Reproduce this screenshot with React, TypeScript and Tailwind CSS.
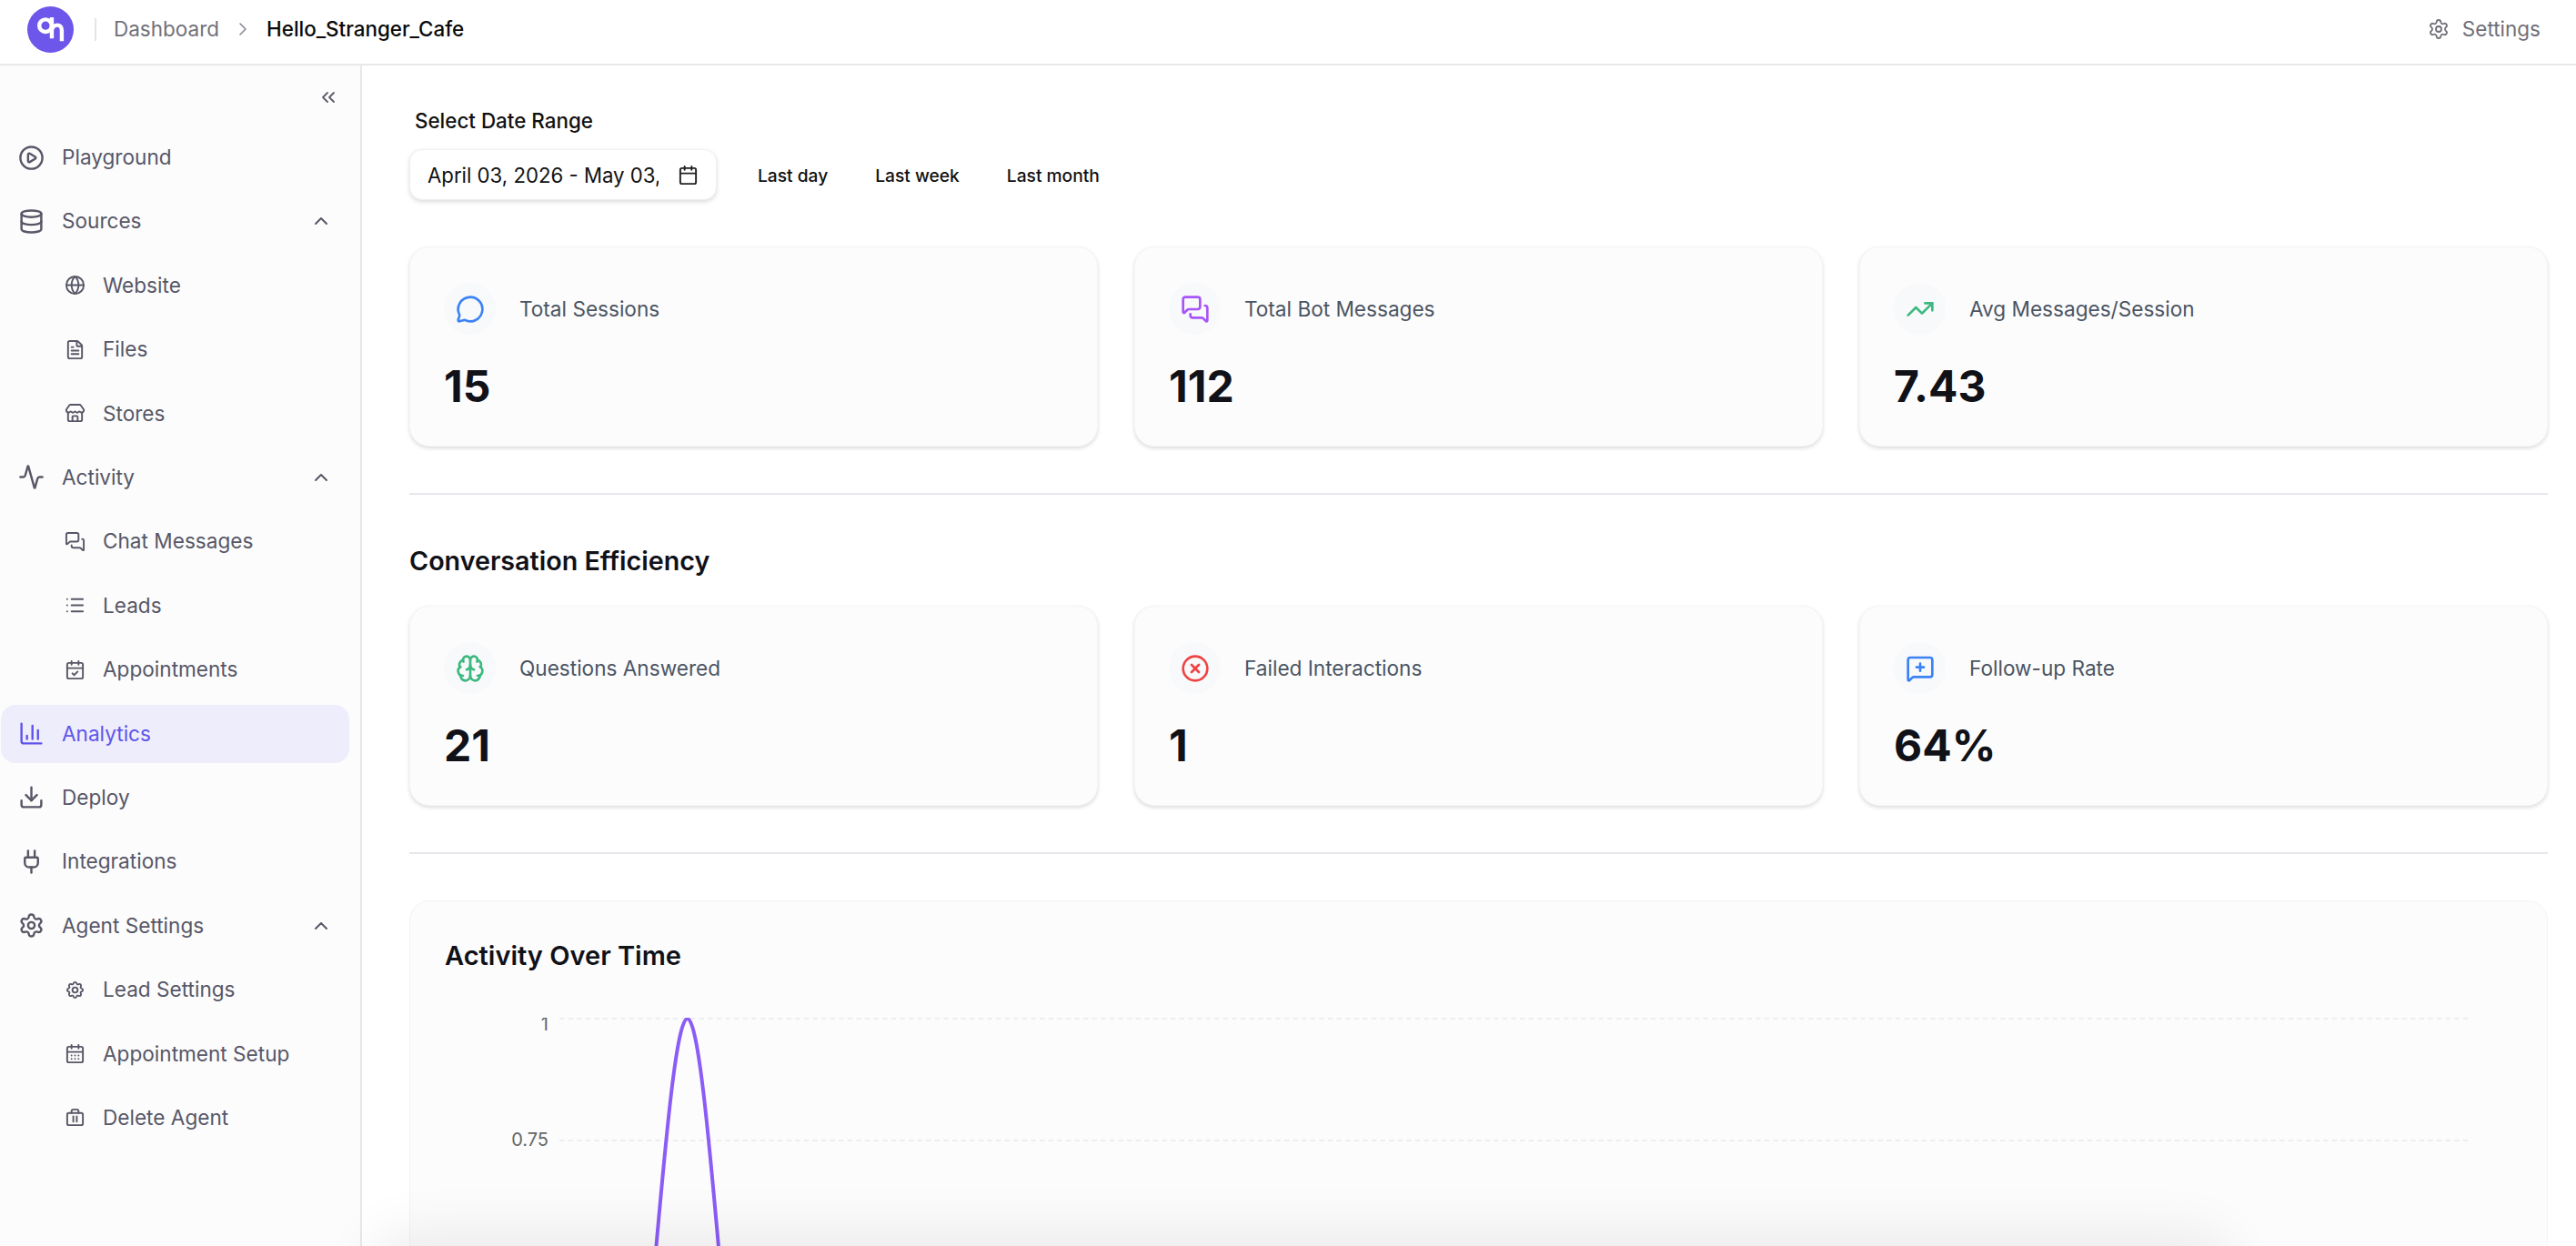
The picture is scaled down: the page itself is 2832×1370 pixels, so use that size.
import {
  Activity,
  Brain,
  Calendar,
  CalendarCheck,
  CalendarDays,
  ChartColumn,
  ChevronRight,
  ChevronsLeft,
  ChevronUp,
  CircleX,
  CirclePlay,
  Database,
  Download,
  FileText,
  Globe,
  List,
  MessageCircle,
  MessageSquarePlus,
  MessagesSquare,
  Plug,
  Settings,
  Store,
  TrendingUp,
} from "lucide-react"
import { TbSettings } from "react-icons/tb"

const font = "font-['Inter',sans-serif]"

function TrashBox({ className }: { className?: string }) {
  return (
    <svg viewBox="0 0 24 24" fill="none" stroke="currentColor" strokeWidth="2" strokeLinecap="round" strokeLinejoin="round" className={className}>
      <path d="M8 7V5a2 2 0 0 1 2-2h4a2 2 0 0 1 2 2v2" />
      <rect x="3" y="7" width="18" height="14" rx="2" />
      <path d="M10 11v6" />
      <path d="M14 11v6" />
    </svg>
  )
}

const navItems = [
  { label: "Playground", icon: CirclePlay },
  { label: "Sources", icon: Database, open: true },
  { label: "Website", icon: Globe, sub: true },
  { label: "Files", icon: FileText, sub: true },
  { label: "Stores", icon: Store, sub: true },
  { label: "Activity", icon: Activity, open: true },
  { label: "Chat Messages", icon: MessagesSquare, sub: true },
  { label: "Leads", icon: List, sub: true },
  { label: "Appointments", icon: CalendarCheck, sub: true },
  { label: "Analytics", icon: ChartColumn, active: true },
  { label: "Deploy", icon: Download },
  { label: "Integrations", icon: Plug },
  { label: "Agent Settings", icon: Settings, open: true },
  { label: "Lead Settings", icon: TbSettings, sub: true },
  { label: "Appointment Setup", icon: CalendarDays, sub: true },
  { label: "Delete Agent", icon: TrashBox, sub: true },
]

const topStats = [
  { label: "Total Sessions", value: "15", icon: MessageCircle, color: "text-[#3b82f6]" },
  { label: "Total Bot Messages", value: "112", icon: MessagesSquare, color: "text-[#a855f7]" },
  { label: "Avg Messages/Session", value: "7.43", icon: TrendingUp, color: "text-[#3cb97f]" },
]

const efficiencyStats = [
  { label: "Questions Answered", value: "21", icon: Brain, color: "text-[#3cb97f]" },
  { label: "Failed Interactions", value: "1", icon: CircleX, color: "text-[#ef4444]" },
  { label: "Follow-up Rate", value: "64%", icon: MessageSquarePlus, color: "text-[#3b82f6]" },
]

function Sidebar() {
  return (
    <aside className="w-[398px] shrink-0 border-r-2 border-[#e8e8e8] bg-[#fcfcfc]">
      <div className="flex h-[69px] items-center justify-end pr-[23px]">
        <ChevronsLeft className="h-[24px] w-[24px] text-[#5c5c6b]" strokeWidth={1.8} />
      </div>
      <nav className="flex flex-col gap-[6.4px] pl-px">
        {navItems.map((item) => {
          const Icon = item.icon
          return (
            <div
              key={item.label}
              className={`flex h-[64px] w-[383px] items-center rounded-[16px] ${item.sub ? "pl-[70px]" : "pl-[19px]"} ${
                item.active ? "bg-[#eeedfb] text-[#5f55ea]" : "text-[#575767]"
              }`}
            >
              <Icon className={`shrink-0 ${item.sub ? "h-[23px] w-[23px]" : "h-[29px] w-[29px]"}`} />
              <span className="ml-[19px] text-[22.6px]">{item.label}</span>
              {item.open && <ChevronUp className="ml-auto mr-[19px] h-[24px] w-[24px]" strokeWidth={2} />}
            </div>
          )
        })}
      </nav>
    </aside>
  )
}

function StatCard({ stat }: { stat: (typeof topStats)[number] }) {
  const Icon = stat.icon
  return (
    <div className="h-[220px] rounded-[22px] border border-[#f5f5f6] bg-[#fcfcfd] px-[37px] pt-[39px] shadow-[0_2px_4px_rgba(0,0,0,0.14)]">
      <div className="flex items-center">
        <div className="flex h-[57px] w-[57px] items-center justify-center rounded-full bg-[#f8f9fb]">
          <Icon className={`h-[32px] w-[32px] ${stat.color}`} />
        </div>
        <span className="ml-[26px] text-[22.6px] text-[#4b5563]">{stat.label}</span>
      </div>
      <div className="mt-[21px] text-[48px] leading-[72px] font-bold text-[#111118]">{stat.value}</div>
    </div>
  )
}

function ActivityChart() {
  const peak = 266.7
  return (
    <svg width="2273" height="300" viewBox="0 0 2273 300" className="mt-[50px] block">
      <line x1="126" y1="1" x2="2225" y2="1" stroke="#eeeeee" strokeWidth="2" strokeDasharray="5.4 4.2" />
      <line x1="126" y1="135" x2="2225" y2="135" stroke="#eeeeee" strokeWidth="2" strokeDasharray="5.4 4.2" />
      <text x="114" y="14" textAnchor="end" fontSize="20" fill="#666666">1</text>
      <text x="114" y="141" textAnchor="end" fontSize="20" fill="#666666">0.75</text>
      <path
        d={`M${peak - 72} 541C${peak - 48} 541 ${peak - 24} 1 ${peak} 1C${peak + 24} 1 ${peak + 48} 541 ${peak + 72} 541`}
        fill="none"
        stroke="#8b5cf6"
        strokeWidth="4"
      />
    </svg>
  )
}

export default function App() {
  return (
    <div className={`relative flex h-[1370px] w-[2832px] flex-col overflow-hidden bg-white ${font}`}>
      <header className="flex h-[72px] shrink-0 items-center border-b-2 border-[#e8e8e8] pr-[39px] pb-[6px] pl-[30px]">
        <div className="flex h-[51px] w-[51px] items-center justify-center rounded-full bg-[#6d56ea]">
          <svg viewBox="0 0 32 32" className="h-[39px] w-[39px]" fill="none" stroke="white" strokeWidth="3.6">
            <circle cx="11.5" cy="12.5" r="5.6" />
            <path d="M17.2 5v19" />
            <path d="M17.2 16c1-3 3-4 5-4s4 1.500 4 5v9.500" />
          </svg>
        </div>
        <div className="mr-[19px] ml-[23px] h-[25px] w-[2px] bg-[#e5e5e5]" />
        <span className="text-[22.5px] text-[#71717a]">Dashboard</span>
        <ChevronRight className="mx-[14px] h-[24px] w-[24px] text-[#8a8a92]" strokeWidth={1.6} />
        <span className="text-[22.4px] font-medium text-[#0a0a0a]">Hello_Stranger_Cafe</span>
        <div className="ml-auto flex items-center gap-[14px] text-[#6f6f78]">
          <Settings className="h-[24px] w-[24px]" strokeWidth={1.8} />
          <span className="text-[22.5px]">Settings</span>
        </div>
      </header>
      <div className="flex min-h-0 flex-1">
        <Sidebar />
        <main className="min-w-0 flex-1 pt-[47px] pr-[31px] pl-[52px]">
          <div className="pl-[6px] text-[22.4px] leading-[28px] font-medium text-[#111111]">Select Date Range</div>
          <div className="mt-[17px] flex items-center">
            <div className="flex h-[56px] w-[338px] items-center rounded-[14px] border border-[#f0f0f0] bg-white pr-[19px] pl-[19px] shadow-[0_2px_5px_rgba(0,0,0,0.14)]">
              <span className="w-[254px] overflow-hidden pt-[1px] text-[22.2px] whitespace-nowrap text-[#111111]">April 03, 2026 - May 03, 2026</span>
              <Calendar className="ml-auto h-[23px] w-[23px] text-[#222222]" />
            </div>
            <div className="mt-[3px] ml-[45px] flex items-center gap-[52px] text-[19.2px] font-medium text-[#111111]">
              <span>Last day</span>
              <span>Last week</span>
              <span>Last month</span>
            </div>
          </div>
          <div className="mt-[51px] grid grid-cols-3 gap-[40px]">
            {topStats.map((s) => (
              <StatCard key={s.label} stat={s} />
            ))}
          </div>
          <div className="mt-[51px] h-[2px] bg-[#e5e7eb]" />
          <h2 className="mt-[55px] text-[28.7px] leading-[36px] font-semibold text-[#111118]">Conversation Efficiency</h2>
          <div className="mt-[31px] grid grid-cols-3 gap-[40px]">
            {efficiencyStats.map((s) => (
              <StatCard key={s.label} stat={s} />
            ))}
          </div>
          <div className="mt-[51px] h-[2px] bg-[#e5e7eb]" />
          <section className="mt-[51px] rounded-[22px] border border-[#f4f4f5] bg-[#fcfcfc] px-[38px] pt-[42px] pb-[40px]">
            <h3 className="text-[29px] leading-[36px] font-semibold text-[#111118]">Activity Over Time</h3>
            <ActivityChart />
          </section>
        </main>
      </div>
      <div className="pointer-events-none absolute bottom-[-60px] left-[420px] h-[60px] w-[2020px] rounded-full shadow-[0_0_60px_16px_rgba(0,0,0,0.07)]" />
    </div>
  )
}
